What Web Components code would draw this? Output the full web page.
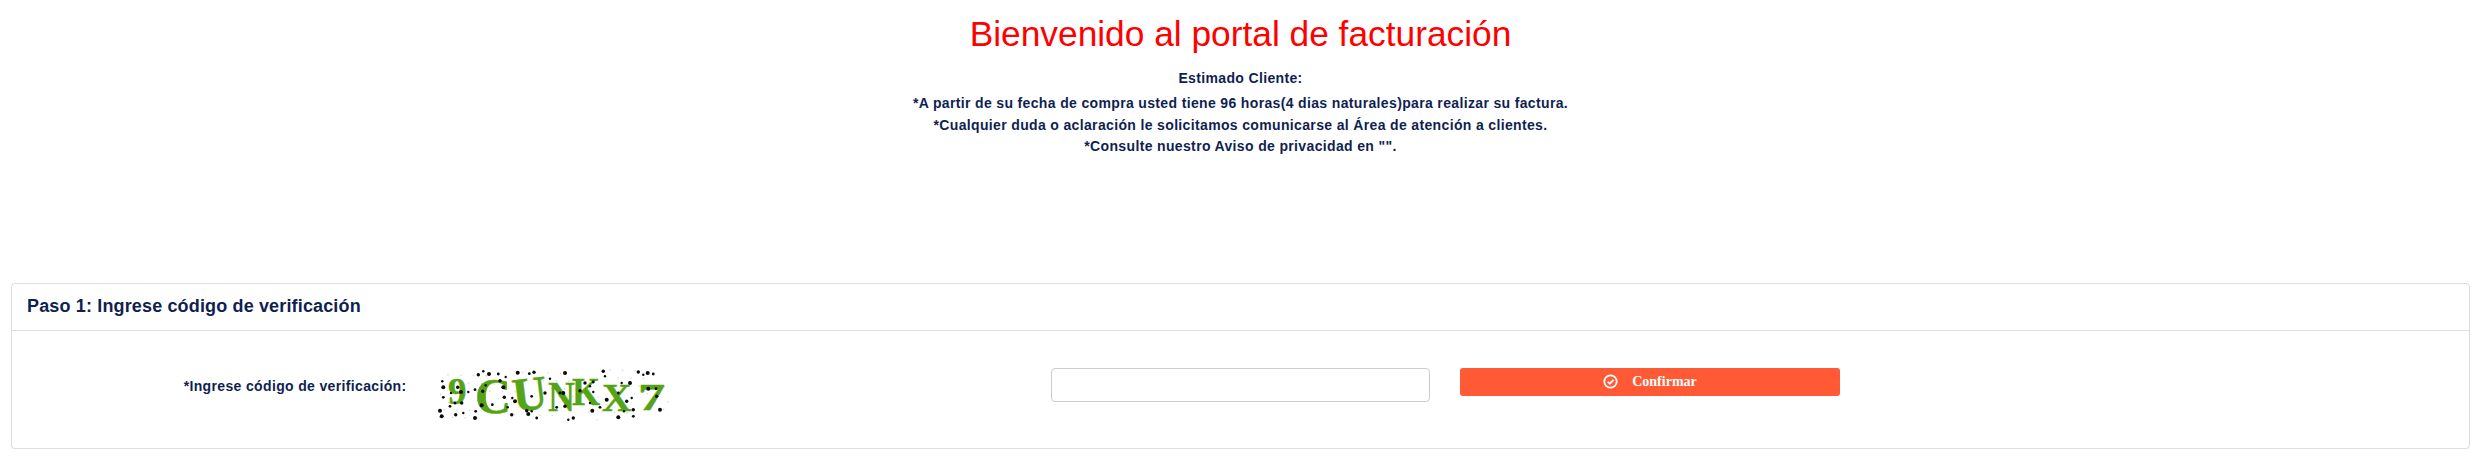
<!DOCTYPE html>
<html lang="es"><head><meta charset="utf-8"><title>Portal de facturación</title>
<style>
html,body{margin:0;padding:0;background:#fff}
body{padding:0 8px 0 11px;font-family:"Liberation Sans",Arial,sans-serif;color:#101f52}
</style></head><body>
<billing-welcome heading="Bienvenido al portal de facturación">
  <strong>Estimado Cliente:</strong>
  <span>*A partir de su fecha de compra usted tiene 96 horas(4 dias naturales)para realizar su factura.</span>
  <span>*Cualquier duda o aclaración le solicitamos comunicarse al Área de atención a clientes.</span>
  <span>*Consulte nuestro Aviso de privacidad en "".</span>
</billing-welcome>
<step-panel heading="Paso 1: Ingrese código de verificación">
  <captcha-form label="*Ingrese código de verificación:"></captcha-form>
</step-panel>
<script>
class BillingWelcome extends HTMLElement{
  constructor(){super();const s=this.attachShadow({mode:'open'});
  s.innerHTML=`<style>
  :host{display:block;text-align:center;height:283px;font-family:"Liberation Sans",Arial,sans-serif}
  h1{margin:0;padding-top:13px;font-size:35.3px;line-height:41px;font-weight:400;color:#f00}
  .msg{display:flex;flex-direction:column;align-items:center;margin-top:14px}
  ::slotted(*){display:block;font-size:14px;font-weight:700;line-height:21.5px;color:#101f52;letter-spacing:.35px}
  ::slotted(strong){line-height:20px;margin-bottom:5px}
  </style><h1></h1><div class="msg"><slot></slot></div>`;
  s.querySelector('h1').textContent=this.getAttribute('heading');}
}
customElements.define('billing-welcome',BillingWelcome);

class StepPanel extends HTMLElement{
  constructor(){super();const s=this.attachShadow({mode:'open'});
  s.innerHTML=`<style>
  :host{display:block;border:1px solid #ddd;border-radius:4px;box-shadow:0 1px 1px rgba(0,0,0,.05);background:#fff;box-sizing:border-box;height:166px;font-family:"Liberation Sans",Arial,sans-serif}
  header{height:47px;box-sizing:border-box;border-bottom:1px solid #ddd;padding:0 15px 2px;display:flex;align-items:center;font-size:18px;font-weight:700;color:#101f52;letter-spacing:.15px}
  .body{padding:37px 0 0}
  </style><header></header><div class="body"><slot></slot></div>`;
  s.querySelector('header').textContent=this.getAttribute('heading');}
}
customElements.define('step-panel',StepPanel);

class CaptchaImage extends HTMLElement{
  constructor(){super();const s=this.attachShadow({mode:'open'});
  const a=[[130,20],[145,10],[162,18],[190,18],[195,38],[212,27],[248,14],[283,17],[297,13],[152,52],[205,58],[120,65],[143,70],[22,40],[25,58],[25,88],[68,58],[48,75],[78,72],[60,105],[80,105],[100,72],[140,112],[172,110],[208,88],[232,90],[240,100],[290,85],[330,75],[218,118],[15,128],[45,115],[62,140],[85,135],[120,150],[122,130],[275,128],[290,130],[280,138],[305,150],[230,140],[345,32],[20,145]];
  const b=[[265,12],[280,20],[293,15],[310,18],[160,10],[165,25],[45,15],[130,42],[105,45],[120,55],[40,75],[30,75],[90,68],[130,72],[170,95],[205,75],[230,100],[245,90],[295,62],[318,62],[320,85],[120,105],[127,128],[150,118],[250,125],[222,130],[205,148],[250,145],[70,150],[55,155],[330,125],[20,118],[45,115],[215,45],[240,45]];
  let dots='';
  const put=(x,y,i)=>{dots+=`<circle cx="${x.toFixed(1)}" cy="${y.toFixed(1)}" r="${[1.7,1.2,2,1.4][i%4]}"/>`};
  a.forEach((p,i)=>put(p[0]/3,p[1]/3,i));
  b.forEach((p,i)=>put(115+p[0]/3,p[1]/3,i));
  let noise='';
  for(let i=0;i<70;i++){const x=(i*37.3+11)%232+2,y=(i*23.7+5)%50+2;noise+=`<circle cx="${x.toFixed(1)}" cy="${y.toFixed(1)}" r=".8"/>`}
  s.innerHTML=`<style>:host{display:block;width:236px;height:54px;margin:-2px 0 0 -2px}svg{display:block;margin-top:-14px}text{font-family:"Liberation Serif",serif;font-weight:700;fill:#55a316;stroke:#55a316}</style>
  <svg width="236" height="82" viewBox="0 -14 236 82" role="img" aria-label="captcha">
  <g fill="#d3d6dd">${noise}</g>
  <text x="13" y="36" font-size="37" stroke-width=".4">9</text>
  <text x="40" y="45" font-size="50" stroke-width=".5">C</text>
  <text x="78" y="42" font-size="48" stroke-width=".5" transform="rotate(-7 95 30)">U</text>
  <text x="113" y="43" font-size="42" stroke-width=".3" textLength="27" lengthAdjust="spacingAndGlyphs">N</text>
  <text x="137" y="37" font-size="40" stroke-width=".4" textLength="28" lengthAdjust="spacingAndGlyphs">K</text>
  <text x="167" y="43" font-size="41" stroke-width=".4">X</text>
  <text x="203" y="42" font-size="38" stroke-width=".5" textLength="27" lengthAdjust="spacingAndGlyphs">7</text>
  <g fill="#0a0a0a">${dots}</g></svg>`;}
}
customElements.define('captcha-image',CaptchaImage);

class ConfirmButton extends HTMLElement{
  constructor(){super();const s=this.attachShadow({mode:'open'});
  s.innerHTML=`<style>
  :host{display:block}
  button{display:flex;align-items:center;justify-content:center;width:100%;height:28px;padding:0;border:0;border-radius:3px;background:#ff5a35;color:#fff;font:700 14px "Liberation Serif",serif}
  svg{display:block;margin:-2px 14px 0 0}
  </style><button type="button"><svg width="15" height="15" viewBox="0 0 15 15" fill="none" stroke="#fff"><circle cx="7.5" cy="7.5" r="6.2" stroke-width="1.7"/><path d="M4.6 7.6 6.8 9.7 10.6 5.8" stroke-width="1.8"/></svg><span><slot></slot></span></button>`;}
}
customElements.define('confirm-button',ConfirmButton);

class CaptchaForm extends HTMLElement{
  constructor(){super();const s=this.attachShadow({mode:'open'});
  s.innerHTML=`<style>
  :host{display:grid;grid-template-columns:repeat(12,1fr);font-family:"Liberation Sans",Arial,sans-serif;color:#101f52}
  .c{padding:0 15px;box-sizing:border-box;min-width:0}
  label{grid-column:span 2;text-align:right;font-size:14px;font-weight:700;letter-spacing:.35px;line-height:18px}
  label.c{padding-top:9px}
  .cap{grid-column:span 3}
  .inp{grid-column:span 2}
  .btn{grid-column:span 2}
  input{display:block;box-sizing:border-box;width:100%;height:34px;border:1px solid #ccc;border-radius:4px;background:#fff;padding:6px 12px;outline:0}
  </style>
  <label class="c" for="code"></label>
  <div class="c cap"><captcha-image></captcha-image></div>
  <div class="c inp"><input id="code" type="text"></div>
  <div class="c btn"><confirm-button>Confirmar</confirm-button></div>`;
  s.querySelector('label').textContent=this.getAttribute('label');}
}
customElements.define('captcha-form',CaptchaForm);
</script>
</body></html>
